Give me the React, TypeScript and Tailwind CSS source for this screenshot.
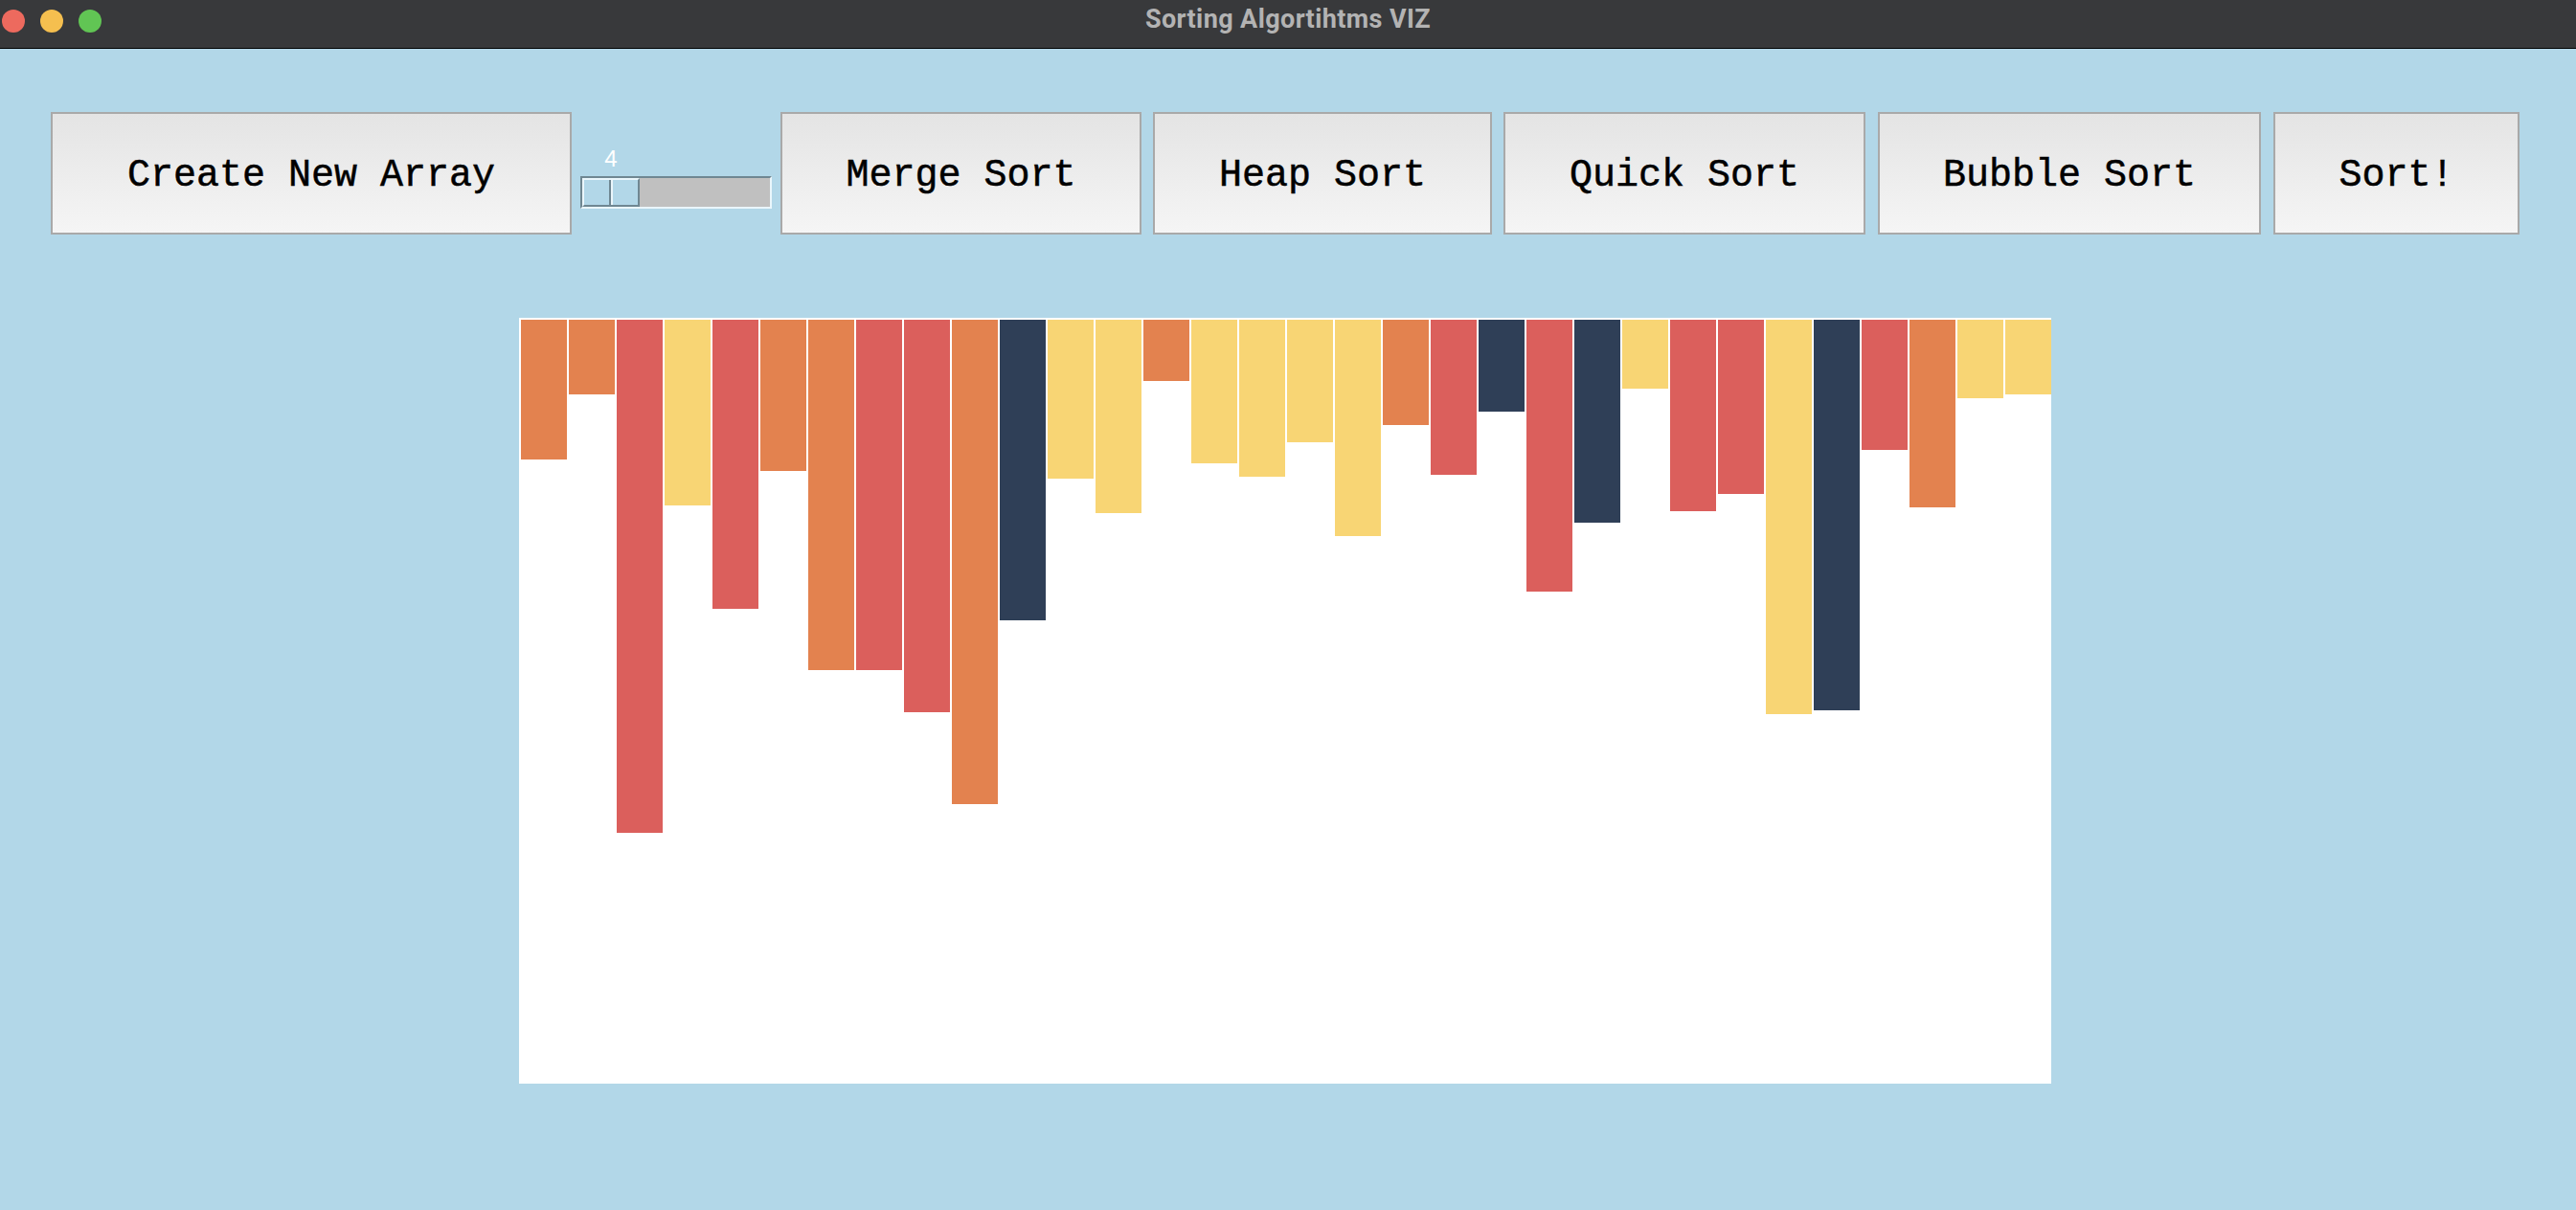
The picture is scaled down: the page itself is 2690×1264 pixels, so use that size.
import React from "react";

type C = "o" | "r" | "y" | "n";

const heights = [146, 78, 536, 194, 302, 158, 366, 366, 410, 506, 314, 166, 202, 64, 150, 164, 128, 226, 110, 162, 96, 284, 212, 72, 200, 182, 412, 408, 136, 196, 82, 78];
const colors: C[] = [
  "o", "o", "r", "y", "r", "o", "o", "r", "r", "o", "n", "y", "y", "o", "y", "y",
  "y", "y", "o", "r", "n", "r", "n", "y", "r", "r", "y", "n", "r", "o", "y", "y",
];

const colorClass: Record<C, string> = {
  o: "bg-[#e3824f]",
  r: "bg-[#db5f5c]",
  y: "bg-[#f8d574]",
  n: "bg-[#2f3f57]",
};

function Btn({ label, w, className = "" }: { label: string; w: string; className?: string }) {
  return (
    <div
      className={`${w} ${className} h-[128px] shrink-0 border-2 border-[#a9a9a9] bg-linear-to-b from-[#e4e4e4] to-[#f5f5f5] flex items-center justify-center pt-[6px] text-[40px] leading-none text-black [font-family:'Liberation_Mono',monospace] [-webkit-text-stroke:0.5px_black] whitespace-pre`}
    >
      {label}
    </div>
  );
}

function Slider() {
  return (
    <div className="w-[200px] ml-[9px] shrink-0 flex flex-col">
      <div className="mt-[37px] w-[64px] h-[24px] text-center text-[24px] leading-none text-white [font-family:'Liberation_Sans',Arial,sans-serif]">
        4
      </div>
      <div className="mt-[6px] h-[34px] w-[200px] border-2 border-t-[#6f8792] border-l-[#6f8792] border-b-[#eaf6fb] border-r-[#eaf6fb] bg-[#c0c0c0] flex">
        <div className="w-[60px] h-full flex border-2 border-t-[#eaf6fb] border-l-[#eaf6fb] border-b-[#6f8792] border-r-[#6f8792] bg-[#b2d7e8]">
          <div className="flex-1" />
          <div className="w-[2px] bg-[#6f8792]" />
          <div className="w-[2px] bg-[#eaf6fb]" />
          <div className="flex-1" />
        </div>
      </div>
    </div>
  );
}

export default function App() {
  return (
    <div className="w-full h-screen flex flex-col bg-[#b2d7e8] overflow-hidden">
      <div className="h-[51px] shrink-0 bg-[#38393b] border-b border-black grid grid-cols-[1fr_auto_1fr]">
        <div className="flex gap-[16px] pl-[2px] pt-[10px]">
          <div className="w-[24px] h-[24px] rounded-full bg-[#ed6a5e]" />
          <div className="w-[24px] h-[24px] rounded-full bg-[#f5bf4f]" />
          <div className="w-[24px] h-[24px] rounded-full bg-[#61c554]" />
        </div>
        <div className="pt-[7px] text-[27px] leading-none font-bold tracking-[0.4px] text-[#b3b3b3] [font-family:Roboto,'Liberation_Sans',sans-serif]">
          Sorting Algortihtms VIZ
        </div>
        <div />
      </div>

      <div className="flex items-start mt-[66px] pl-[53px]">
        <Btn label="Create New Array" w="w-[544px]" />
        <Slider />
        <Btn label="Merge Sort" w="w-[377px]" className="ml-[9px]" />
        <Btn label="Heap Sort" w="w-[354px]" className="ml-[12px]" />
        <Btn label="Quick Sort" w="w-[378px]" className="ml-[12px]" />
        <Btn label="Bubble Sort" w="w-[400px]" className="ml-[13px]" />
        <Btn label="Sort!" w="w-[257px]" className="ml-[13px]" />
      </div>

      <div className="mt-[87px] ml-[542px] w-[1600px] h-[800px] bg-white flex items-start pt-[2px]">
        {heights.map((h, i) => (
          <div key={i} className={`w-[48px] ml-[2px] shrink-0 ${colorClass[colors[i]]}`} style={{ height: h }} />
        ))}
      </div>
    </div>
  );
}
